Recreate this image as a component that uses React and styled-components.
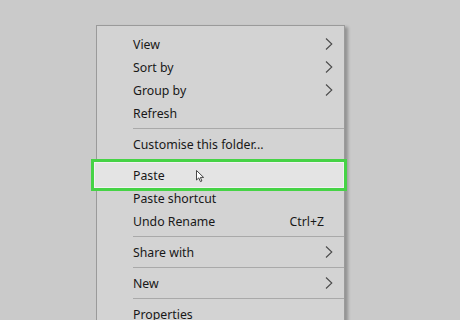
import React from "react";
import styled, { createGlobalStyle } from "styled-components";

const GlobalStyle = createGlobalStyle`
  html, body {
    margin: 0;
    padding: 0;
    background: #cacaca;
    overflow: hidden;
  }
  body {
    font-family: "Noto Sans", "Open Sans", sans-serif;
  }
`;

const Page = styled.div`
  width: 460px;
  height: 320px;
  padding: 25px 0 0 96px;
  box-sizing: border-box;
`;

const Menu = styled.div`
  width: 249px;
  box-sizing: border-box;
  background: #d3d3d3;
  border: 1px solid #9a9a9a;
  border-bottom: none;
  padding-top: 6px;
  box-shadow: 3px 2px 3px rgba(0, 0, 0, 0.28);
`;

const Row = styled.div`
  position: relative;
  height: 23px;
  display: flex;
  align-items: center;
  padding: 1px 11px 0 36px;
  box-sizing: border-box;
  font-size: 12.3px;
  color: #181818;
`;

const Label = styled.span`
  flex: 1;
  position: relative;
  z-index: 1;
`;

const Shortcut = styled.span`
  position: relative;
  z-index: 1;
  margin-right: 9px;
`;

const Separator = styled.div`
  height: 8px;
  display: flex;
  align-items: center;
  padding-left: 36px;

  &::after {
    content: "";
    flex: 1;
    height: 1px;
    background: #a9a9a9;
  }
`;

const Highlight = styled.div`
  position: absolute;
  left: -6px;
  right: -3px;
  top: -4px;
  bottom: -5px;
  border: 3px solid #46d346;
  background: #e4e4e4;
  box-shadow: inset 0 0 0 1px #f2f2f2;
`;

const Pointer = styled.svg`
  position: absolute;
  left: 99px;
  top: 7px;
  z-index: 2;
`;

const Chevron = () => (
  <svg width="8" height="12" viewBox="0 0 8 12">
    <path d="M1 0.5 L6.8 6 L1 11.5" fill="none" stroke="#4a4a4a" strokeWidth="1.1" />
  </svg>
);

const items = [
  { label: "View", arrow: true },
  { label: "Sort by", arrow: true },
  { label: "Group by", arrow: true },
  { label: "Refresh" },
  "sep",
  { label: "Customise this folder..." },
  "sep",
  { label: "Paste", active: true },
  { label: "Paste shortcut" },
  { label: "Undo Rename", shortcut: "Ctrl+Z" },
  "sep",
  { label: "Share with", arrow: true },
  "sep",
  { label: "New", arrow: true },
  "sep",
  { label: "Properties" },
];

export default function App() {
  return (
    <>
      <GlobalStyle />
      <Page>
        <Menu>
          {items.map((item, i) =>
            item === "sep" ? (
              <Separator key={i} />
            ) : (
              <Row key={i}>
                {item.active && <Highlight />}
                <Label>{item.label}</Label>
                {item.shortcut && <Shortcut>{item.shortcut}</Shortcut>}
                {item.arrow && <Chevron />}
                {item.active && (
                  <Pointer width="9" height="13" viewBox="0 0 9 13">
                    <path
                      d="M0.5 0.5 L0.5 10 L2.8 7.9 L4.4 11.6 L5.9 11 L4.4 7.4 L7.6 7.4 Z"
                      fill="#fff"
                      stroke="#333"
                      strokeWidth="0.9"
                      strokeLinejoin="round"
                    />
                  </Pointer>
                )}
              </Row>
            )
          )}
        </Menu>
      </Page>
    </>
  );
}
